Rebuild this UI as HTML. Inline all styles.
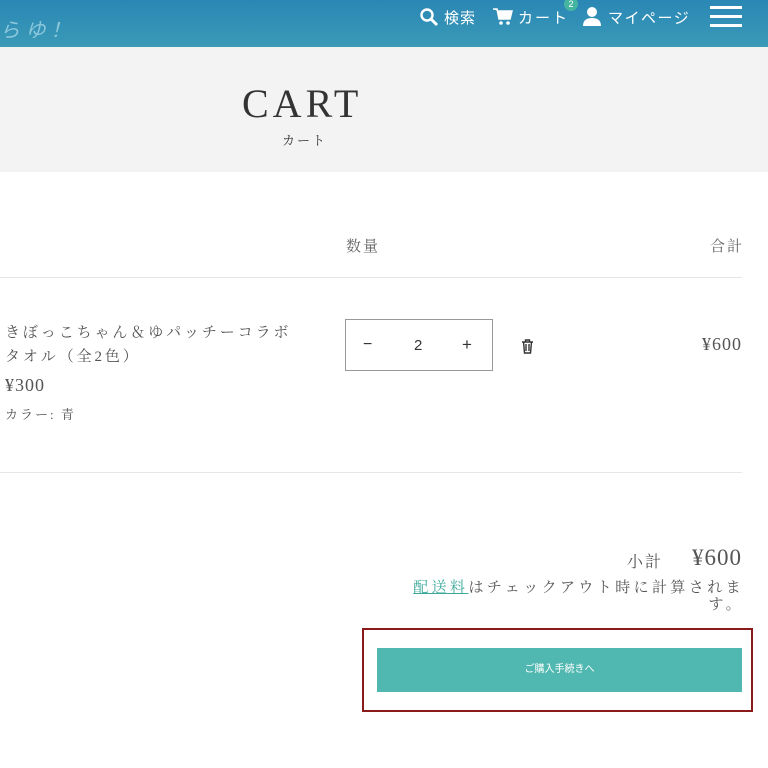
<!DOCTYPE html>
<html><head><meta charset="utf-8"><style>
*{margin:0;padding:0;box-sizing:border-box}
body{width:768px;height:768px;overflow:hidden;background:#fff;font-family:"Liberation Serif","Noto Serif CJK SC",serif;color:#555;position:relative}
.hd{position:absolute;left:0;top:0;width:768px;height:47px;background:linear-gradient(#2a87b5,#3a9ab7)}
.hd span{position:absolute;color:#fff;font-family:"Liberation Sans","Noto Sans CJK JP",sans-serif;font-size:15px;top:7px}
.ttl{position:absolute;left:0;top:47px;width:768px;height:125px;background:#f3f3f3}
.a{position:absolute;white-space:nowrap}
.r{position:absolute;white-space:nowrap;right:26px;text-align:right}
.line{position:absolute;left:0;width:742px;height:1px;background:#e6e6e6}
</style></head><body>
<div class="hd">
<span style="left:0;top:14px;color:#8cc8dc;font-size:20px;font-style:italic">ら ゆ！</span>
<svg style="position:absolute;left:419px;top:7px" width="20" height="20" viewBox="0 0 20 20"><circle cx="8" cy="8" r="5.5" fill="none" stroke="#fff" stroke-width="2.4"/><path d="M12 12l6 6" stroke="#fff" stroke-width="3"/></svg>
<span style="left:444px;letter-spacing:1px">検索</span>
<svg style="position:absolute;left:493px;top:8px" width="20" height="18" viewBox="0 0 20 18"><path d="M0 1h4l2 10h11l2-8H5" fill="#fff" stroke="#fff" stroke-width="1.5"/><circle cx="8" cy="15" r="1.8" fill="#fff"/><circle cx="15" cy="15" r="1.8" fill="#fff"/></svg>
<span style="left:518px;letter-spacing:2px">カート</span>
<div style="position:absolute;left:564px;top:-3px;width:14px;height:14px;border-radius:7px;background:#45b5a0;color:#fff;font:9px 'Liberation Sans',sans-serif;text-align:center;line-height:14px">2</div>
<svg style="position:absolute;left:582px;top:6px" width="20" height="20" viewBox="0 0 20 20"><circle cx="10" cy="6" r="5" fill="#fff"/><path d="M1 20q0-8 9-8t9 8z" fill="#fff"/></svg>
<span style="left:608px;letter-spacing:1.5px">マイページ</span>
<div style="position:absolute;left:710px;top:6px;width:32px;height:3px;background:#fff"></div>
<div style="position:absolute;left:710px;top:15px;width:32px;height:3px;background:#fff"></div>
<div style="position:absolute;left:710px;top:24px;width:32px;height:3px;background:#fff"></div>
</div>
<div class="ttl"></div>
<div class="a" style="left:242px;top:80px;font-size:40px;letter-spacing:4px;color:#333">CART</div>
<div class="a" style="left:282px;top:130px;font-size:13px;letter-spacing:2px;color:#333">カート</div>
<div class="a" style="left:346px;top:235px;font-size:15px;letter-spacing:2px;color:#666">数量</div>
<div class="r" style="top:235px;font-size:15px;letter-spacing:2px;color:#666;right:24px">合計</div>
<div class="line" style="top:277px"></div>
<div class="a" style="left:5px;top:321px;font-size:15px;letter-spacing:2.9px;line-height:24px">きぼっこちゃん＆ゆパッチーコラボ<br>タオル（全2色）</div>
<div class="a" style="left:5px;top:375px;font-size:18px;letter-spacing:1px">¥300</div>
<div class="a" style="left:5px;top:404px;font-size:13px;letter-spacing:2px">カラー: 青</div>
<div style="position:absolute;left:345px;top:319px;width:148px;height:52px;border:1px solid #999"></div>
<div class="a" style="left:363px;top:336px;font:16px 'Liberation Sans',sans-serif;color:#333">−</div>
<div class="a" style="left:414px;top:337px;font:15px 'Liberation Sans',sans-serif;color:#333">2</div>
<div class="a" style="left:462px;top:335px;font:17px 'Liberation Sans',sans-serif;color:#333">+</div>
<svg style="position:absolute;left:521px;top:339px" width="13" height="15" viewBox="0 0 13 15"><path d="M1 3h11M4.5 3V1h4v2M2.5 3l1 11h6l1-11M5 5v7M8 5v7" fill="none" stroke="#333" stroke-width="1.4"/></svg>
<div class="r" style="top:334px;font-size:18px;letter-spacing:1px">¥600</div>
<div class="line" style="top:472px"></div>
<div class="a" style="left:627px;top:549px;font-size:16px;letter-spacing:2px">小計</div>
<div class="r" style="top:545px;font-size:23px;letter-spacing:1px">¥600</div>
<div class="r" style="top:580px;font-size:15px;letter-spacing:3.4px;line-height:17px;right:24px"><span style="color:#3aa99a;text-decoration:underline">配送料</span>はチェックアウト時に計算されま<br>す。</div>
<div style="position:absolute;left:362px;top:628px;width:391px;height:84px;border:2px solid #8b1a1a"></div>
<div style="position:absolute;left:377px;top:648px;width:365px;height:44px;background:#50b8b0;color:#fff;font:10px 'Liberation Sans','Noto Sans CJK JP',sans-serif;text-align:center;line-height:44px">ご購入手続きへ</div>
</body></html>
